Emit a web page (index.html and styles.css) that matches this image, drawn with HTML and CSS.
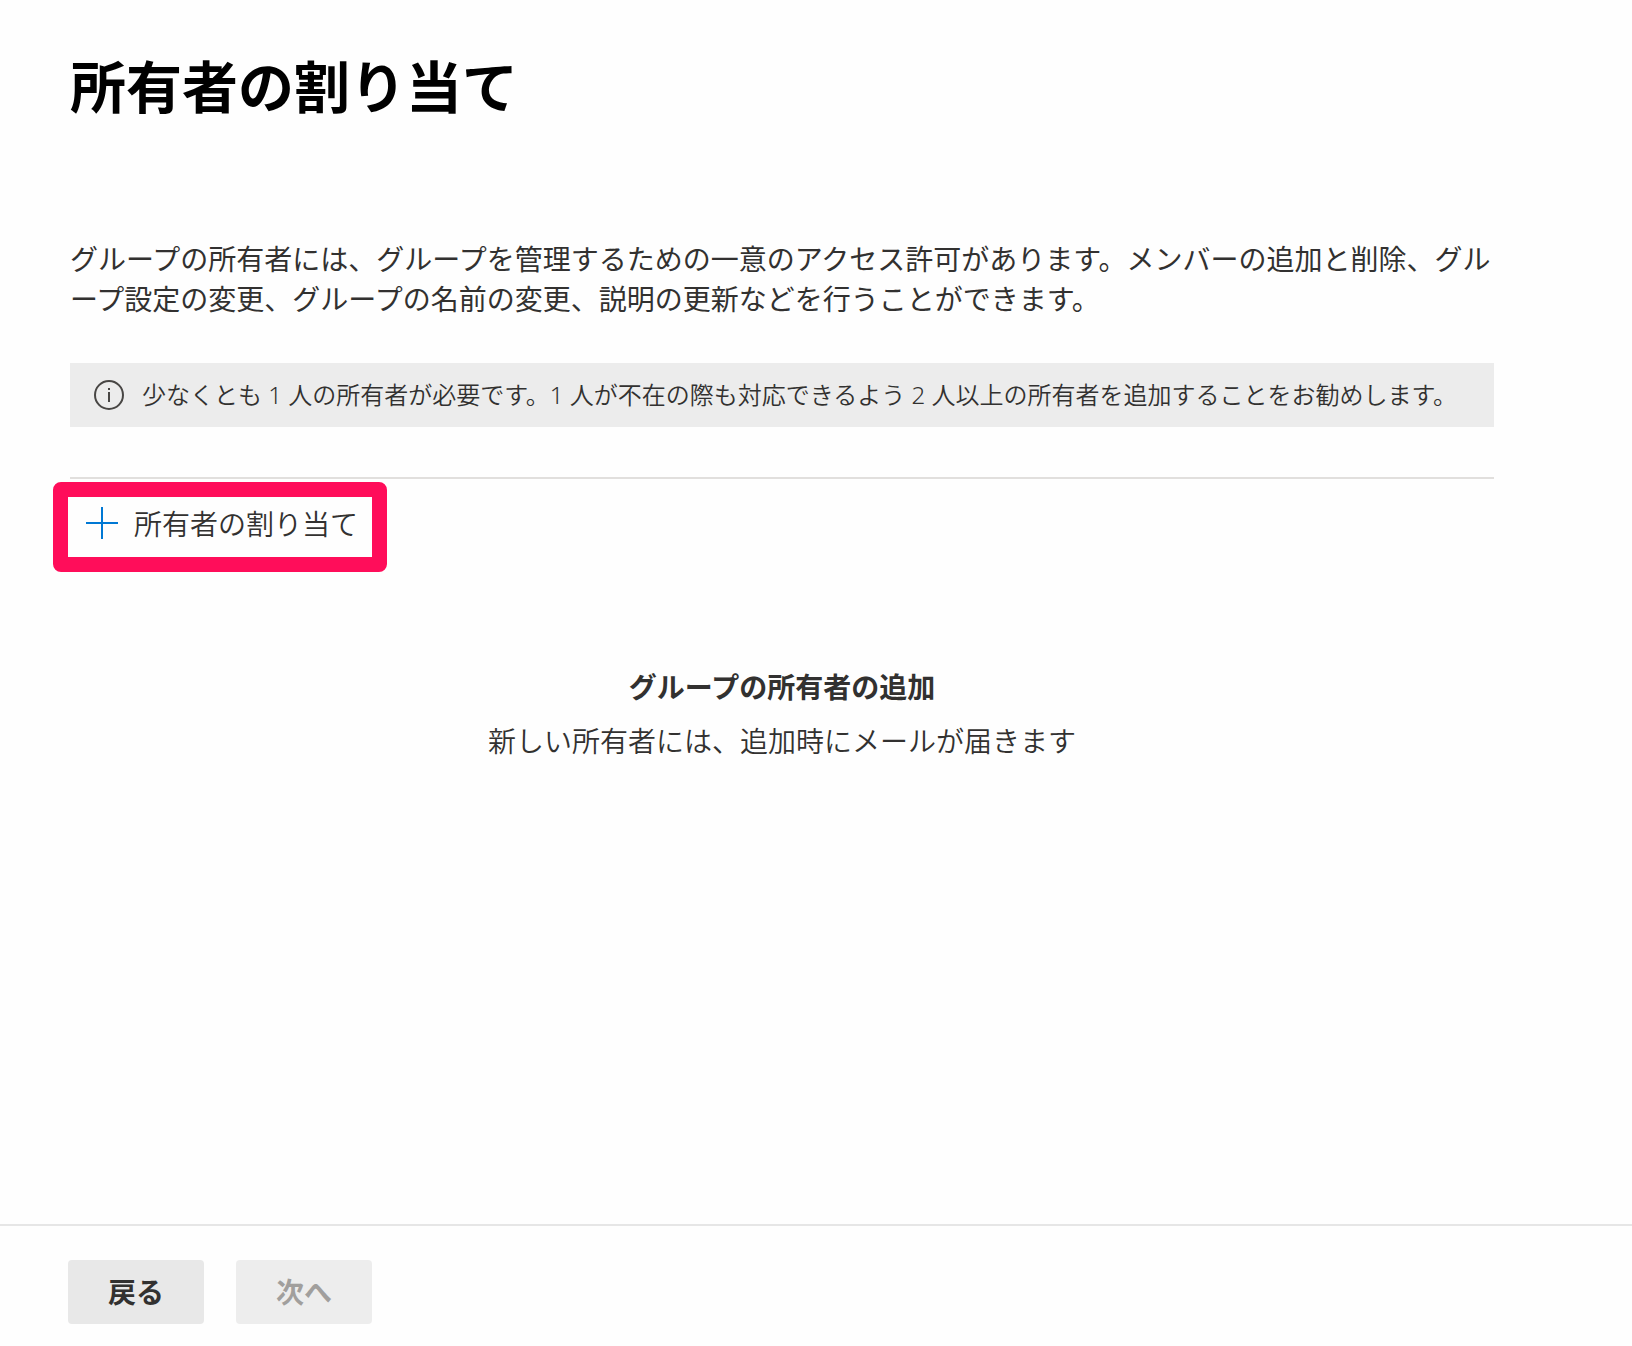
FILE: index.html
```html
<!DOCTYPE html>
<html lang="ja">
<head>
    <meta charset="UTF-8">
    <meta name="viewport" content="width=device-width, initial-scale=1.0">
    <title>所有者の割り当て</title>
    <link rel="stylesheet" href="styles.css">
</head>
<body>

<!-- 本文 -->
    <main class="content">
        <h1>所有者の割り当て</h1>

        <p class="description">グループの所有者には、グループを管理するための一意のアクセス許可があります。メンバーの追加と削除、グループ設定の変更、グループの名前の変更、説明の更新などを行うことができます。</p>

        <div class="message-bar">
            <svg class="info-icon" viewBox="0 0 30 30" aria-hidden="true">
                <circle cx="15" cy="15" r="14" fill="none" stroke="currentColor" stroke-width="2"/>
                <path d="M14 8h2v2h-2zM14 12h2v10h-2z" fill="currentColor"/>
            </svg>
            <span>少なくとも 1 人の所有者が必要です。1 人が不在の際も対応できるよう 2 人以上の所有者を追加することをお勧めします。</span>
        </div>

        <div class="command-bar">
            <button type="button" class="command-button">
                <svg class="plus-icon" viewBox="0 0 32 32" aria-hidden="true">
                    <path d="M15 0h2v15h15v2H17v15h-2V17H0v-2h15z" fill="currentColor"/>
                </svg>
                所有者の割り当て
            </button>
            <div class="highlight"></div>
        </div>

        <section class="empty-state">
            <h2>グループの所有者の追加</h2>
            <p>新しい所有者には、追加時にメールが届きます</p>
        </section>
    </main>

<!-- フッター -->
    <footer>
        <button type="button" class="nav-button">戻る</button>
        <button type="button" class="nav-button" disabled>次へ</button>
    </footer>

</body>
</html>
```
FILE: styles.css
```css
/* 全体 */
* {
    box-sizing: border-box;
}

body {
    display: flex;
    flex-direction: column;
    min-height: 100vh;
    margin: 0;
    font-family: "Noto Sans CJK JP", sans-serif;
    font-size: 28px;
    line-height: 40px;
    color: #323130;
    background: #fefefe;
}

h1, h2, p {
    margin: 0;
}

button {
    font: inherit;
    color: inherit;
    border: none;
    cursor: pointer;
}

/* 本文 */
.content {
    flex: 1;
    padding: 44px 138px 48px 70px;
}

h1 {
    margin-bottom: 114px;
    font-size: 56px;
    font-weight: 700;
    line-height: 80px;
    color: #000;
}

.description {
    margin-bottom: 45px;
}

/* メッセージバー */
.message-bar {
    display: flex;
    align-items: center;
    gap: 18px;
    min-height: 64px;
    margin-bottom: 50px;
    padding: 0 24px;
    font-family: "Noto Sans", "Noto Sans CJK JP", sans-serif;
    font-size: 24px;
    font-weight: 350;
    line-height: 32px;
    background: #ececec;
}

.info-icon {
    flex: none;
    width: 30px;
    height: 30px;
    color: #484644;
}

/* コマンドバー */
.command-bar {
    position: relative;
    border-top: 2px solid #e1dfdd;
}

.command-button {
    display: flex;
    align-items: center;
    gap: 16px;
    height: 88px;
    padding: 0 16px;
    font-weight: 350;
    background: none;
}

.plus-icon {
    width: 32px;
    height: 32px;
    color: #0078d4;
}

.highlight {
    position: absolute;
    top: 3px;
    left: -17px;
    width: 334px;
    height: 90px;
    border: 15px solid #ff0d5a;
    border-radius: 8px;
    pointer-events: none;
}

/* 空の状態 */
.empty-state {
    padding-top: 99px;
    text-align: center;
    font-weight: 350;
}

.empty-state h2 {
    margin-bottom: 14px;
    font-size: 28px;
    font-weight: 700;
}

/* フッター */
footer {
    display: flex;
    gap: 32px;
    padding: 34px 68px 22px;
    border-top: 2px solid #e6e6e6;
}

.nav-button {
    min-width: 136px;
    height: 64px;
    padding-bottom: 4px;
    font-weight: 700;
    border-radius: 4px;
    background: #e8e8e8;
}

.nav-button:disabled {
    color: #a19f9d;
    background: #ededed;
    cursor: default;
}
```
